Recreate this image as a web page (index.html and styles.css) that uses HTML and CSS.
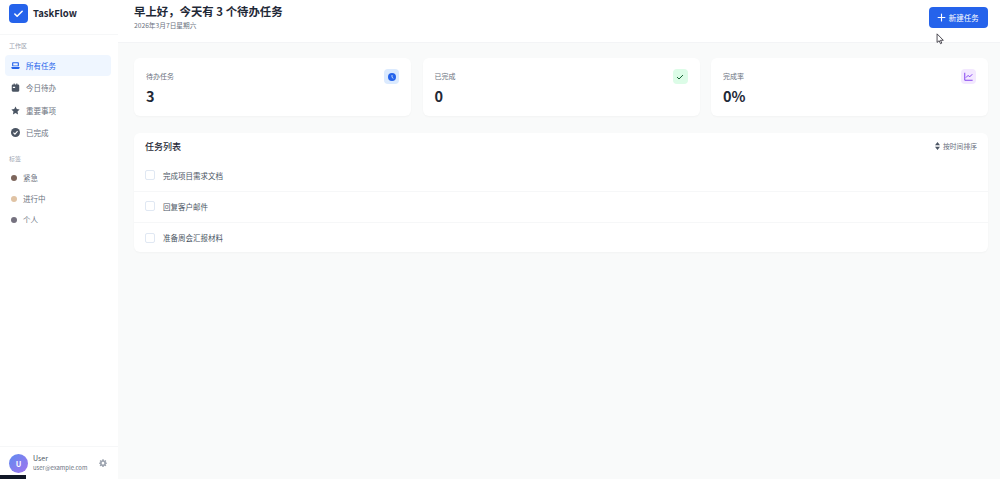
FILE: index.html
```html
<!DOCTYPE html>
<html lang="zh">
<head>
<meta charset="utf-8">
<title>TaskFlow</title>
<link rel="stylesheet" href="styles.css">
</head>
<body>
<div class="app">
  <aside class="sidebar">
    <div class="brand">
      <div class="logo"><svg viewBox="0 0 24 24" width="11" height="11" fill="none" stroke="#fff" stroke-width="3.4" stroke-linecap="round" stroke-linejoin="round"><path d="M4 13l5 5L20 7"/></svg></div>
      <span class="brand-name">TaskFlow</span>
    </div>
    <div class="section-title first">工作区</div>
    <nav class="nav">
      <a class="nav-item active"><svg viewBox="0 0 24 24" width="9" height="9" fill="#2563eb"><path d="M5 3h14a2 2 0 0 1 2 2v9H3V5a2 2 0 0 1 2-2zm1 3v6h12V6H6zM1 16h22v2a3 3 0 0 1-3 3H4a3 3 0 0 1-3-3v-2z"/></svg><span>所有任务</span></a>
      <a class="nav-item"><svg viewBox="0 0 24 24" width="9" height="9" fill="#4b5563"><path d="M7 1h3v3h4V1h3v3h2a3 3 0 0 1 3 3v13a3 3 0 0 1-3 3H5a3 3 0 0 1-3-3V7a3 3 0 0 1 3-3h2V1zM5 10v3h6v-3H5z"/></svg><span>今日待办</span></a>
      <a class="nav-item"><svg viewBox="0 0 24 24" width="9" height="9" fill="#4b5563"><path d="M12 1l3.400 7.300 7.600.9-5.600 5.400 1.500 7.900L12 18.600l-6.900 3.900 1.500-7.900L1 9.200l7.600-.9z"/></svg><span>重要事项</span></a>
      <a class="nav-item"><svg viewBox="0 0 24 24" width="9" height="9"><circle cx="12" cy="12" r="12" fill="#4b5563"/><path d="M6.500 12.500l4 4 7-8" fill="none" stroke="#fff" stroke-width="3"/></svg><span>已完成</span></a>
    </nav>
    <div class="section-title tags-title">标签</div>
    <div class="tags">
      <div class="tag"><i class="dot dot-urgent"></i><span>紧急</span></div>
      <div class="tag"><i class="dot dot-progress"></i><span>进行中</span></div>
      <div class="tag"><i class="dot dot-personal"></i><span>个人</span></div>
    </div>
    <div class="user">
      <div class="avatar">U</div>
      <div class="user-info">
        <div class="user-name">User</div>
        <div class="user-mail">user@example.com</div>
      </div>
      <svg class="gear" viewBox="0 0 24 24" width="8" height="8" fill="#9ca3af"><path fill-rule="evenodd" d="M10 1h4l.6 3.100 1.900.8L19.200 3 22 5.800l-1.900 2.700.8 1.900L24 11v3l-3.100.6-.8 1.900 1.900 2.700-2.800 2.800-2.700-1.900-1.900.8L14 24h-4l-.6-3.100-1.900-.8L4.800 22 2 19.200l1.900-2.700-.8-1.900L0 14v-3l3.100-.6.8-1.900L2 5.800 4.800 3l2.700 1.900 1.900-.8zM12 8.500a4 4 0 1 0 0 8 4 4 0 0 0 0-8z"/></svg>
    </div>
  </aside>
  <main class="main">
    <header class="topbar">
      <div>
        <h1 class="greeting">早上好，今天有 3 个待办任务</h1>
        <p class="date">2026年3月7日星期六</p>
      </div>
      <button class="new-btn"><svg viewBox="0 0 24 24" width="9" height="9" fill="none" stroke="#fff" stroke-width="3" stroke-linecap="round"><path d="M12 3v18M3 12h18"/></svg><span>新建任务</span></button>
    </header>
    <div class="content">
      <section class="stats">
        <div class="card stat">
          <div class="stat-text"><div class="stat-label">待办任务</div><div class="stat-value">3</div></div>
          <div class="stat-icon icon-blue"><svg viewBox="0 0 24 24" width="8" height="8"><circle cx="12" cy="12" r="12" fill="#2563eb"/><path d="M12 6v7l4 3" fill="none" stroke="#dbeafe" stroke-width="2.500"/></svg></div>
        </div>
        <div class="card stat">
          <div class="stat-text"><div class="stat-label">已完成</div><div class="stat-value">0</div></div>
          <div class="stat-icon icon-green"><svg viewBox="0 0 24 24" width="8" height="8" fill="none" stroke="#166534" stroke-width="3" stroke-linecap="round" stroke-linejoin="round"><path d="M4 13l5 5L20 7"/></svg></div>
        </div>
        <div class="card stat">
          <div class="stat-text"><div class="stat-label">完成率</div><div class="stat-value">0%</div></div>
          <div class="stat-icon icon-purple"><svg viewBox="0 0 24 24" width="9" height="9" fill="none" stroke="#7c3aed" stroke-width="2.500" stroke-linejoin="round"><path d="M2 2v20h21"/><path d="M5 15l6-6 4 4 7-7"/></svg></div>
        </div>
      </section>
      <section class="card list">
        <div class="list-head">
          <h2 class="list-title">任务列表</h2>
          <div class="sort"><svg viewBox="0 0 10 16" width="5" height="8" fill="#4b5563"><path d="M5 0l5 6.500H0zM5 16l5-6.500H0z"/></svg><span>按时间排序</span></div>
        </div>
        <div class="task"><i class="check"></i><span>完成项目需求文档</span></div>
        <div class="task"><i class="check"></i><span>回复客户邮件</span></div>
        <div class="task"><i class="check"></i><span>准备周会汇报材料</span></div>
      </section>
    </div>
  </main>
</div>
<svg class="cursor" viewBox="0 0 10 14" width="9" height="12"><path d="M1 1v10l2.500-2 1.500 3.500 1.500-.7L5 8.500h3.300z" fill="#fff" stroke="#33313a" stroke-width="1"/></svg>
<div class="taskbar-edge"></div>
</body>
</html>
```

FILE: styles.css
```css
* { box-sizing: border-box; }
html, body { margin: 0; height: 100%; }
body {
  font-family: "Noto Sans CJK SC", "Noto Sans", sans-serif;
  color: #1f2937;
  background: #f9fafa;
  overflow: hidden;
}
.app { display: flex; height: 479px; }

.sidebar {
  width: 118px;
  flex: none;
  display: flex;
  flex-direction: column;
  background: #fff;
}
.brand {
  height: 35px;
  flex: none;
  display: flex;
  align-items: flex-start;
  gap: 5px;
  padding: 4px 9px 0;
  border-bottom: 1px solid #f6f7f8;
}
.logo {
  width: 19px;
  height: 19px;
  border-radius: 4px;
  background: #2563eb;
  display: flex;
  align-items: center;
  justify-content: center;
}
.brand-name { font-size: 9.500px; font-weight: 700; line-height: 19px; color: #1f2937; }
.section-title { font-size: 6px; line-height: 8px; color: #9ca3af; padding-left: 9px; }
.section-title.first { margin-top: 7px; }
.nav { display: flex; flex-direction: column; gap: 2px; margin: 5px 7px 0 5px; }
.nav-item {
  height: 20.500px;
  display: flex;
  align-items: center;
  gap: 6px;
  padding-left: 6px;
  border-radius: 4px;
  font-size: 7.500px;
  color: #6b7280;
}
.nav-item svg { flex: none; }
.nav-item.active { background: #eff6ff; color: #2563eb; }
.tags-title { margin-top: 12px; }
.tags { display: flex; flex-direction: column; margin-top: 4px; padding-left: 11px; }
.tag {
  height: 21px;
  display: flex;
  align-items: center;
  gap: 6px;
  font-size: 7.500px;
  color: #6b7280;
}
.dot { width: 6px; height: 6px; border-radius: 50%; flex: none; }
.dot-urgent { background: #7d665c; }
.dot-progress { background: #e0c3a4; }
.dot-personal { background: #75717f; }

.user {
  margin-top: auto;
  height: 33px;
  flex: none;
  display: flex;
  align-items: center;
  padding: 0 11px 0 9px;
  gap: 5px;
  border-top: 1px solid #f6f7f8;
}
.avatar {
  width: 19px;
  height: 19px;
  flex: none;
  border-radius: 50%;
  background: linear-gradient(135deg, #5f8bf0, #a274ee);
  color: #fff;
  font-size: 7.500px;
  font-weight: 700;
  display: flex;
  align-items: center;
  justify-content: center;
}
.user-info { flex: 1; min-width: 0; }
.user-name { font-size: 7px; line-height: 9px; color: #4b5563; }
.user-mail { font-size: 5.900px; line-height: 9px; color: #6b7280; white-space: nowrap; }
.gear { flex: none; }

.main { flex: 1; min-width: 0; display: flex; flex-direction: column; }
.topbar {
  height: 43px;
  flex: none;
  display: flex;
  justify-content: space-between;
  align-items: flex-start;
  padding: 3px 12px 0 16px;
  background: #fff;
  border-bottom: 1px solid #f3f4f6;
}
.greeting { margin: 0; font-size: 11.400px; line-height: 17px; font-weight: 700; color: #1f2937; }
.date { margin: 0; font-size: 6.700px; line-height: 10px; color: #6b7280; }
.new-btn {
  margin-top: 4px;
  width: 59px;
  height: 21px;
  border: 0;
  border-radius: 4px;
  background: #2563eb;
  color: #fff;
  display: flex;
  align-items: center;
  justify-content: center;
  gap: 3px;
  font: 400 7.500px "Noto Sans CJK SC", "Noto Sans", sans-serif;
  padding: 0 1.500px 0 0;
}
.content { flex: 1; padding: 15px 12px 0 16px; display: flex; flex-direction: column; gap: 17px; }
.card { background: #fff; border-radius: 6px; box-shadow: 0 1px 2px rgba(0, 0, 0, .03); }
.stats { display: grid; grid-template-columns: repeat(3, 1fr); gap: 11.500px; }
.stat {
  height: 58px;
  display: flex;
  justify-content: space-between;
  padding: 11px 12px;
}
.stat-label { font-size: 7px; line-height: 14px; color: #6b7280; }
.stat-value { font-size: 14.500px; line-height: 20px; margin-top: 3px; font-weight: 700; color: #1f2937; }
.stat-icon {
  width: 15px;
  height: 15px;
  border-radius: 4px;
  display: flex;
  align-items: center;
  justify-content: center;
}
.icon-blue { background: #dbeafe; }
.icon-green { background: #dcfce7; }
.icon-purple { background: #f3e8ff; }

.list-head {
  height: 28px;
  display: flex;
  align-items: center;
  justify-content: space-between;
  padding: 0 11px 2px;
}
.list-title { margin: 0; font-size: 9px; font-weight: 500; color: #1f2937; }
.sort { display: flex; align-items: center; gap: 3px; font-size: 6.800px; color: #6b7280; }
.task {
  height: 31px;
  display: flex;
  align-items: center;
  gap: 8px;
  padding: 0 0 2px 11px;
  font-size: 7.500px;
  color: #4b5563;
  border-bottom: 1px solid #f6f7f8;
}
.task:last-child { border-bottom: 0; height: 29px; padding-bottom: 0; }
.check { width: 10px; height: 10px; border: 1px solid #e0e8f3; border-radius: 2px; flex: none; }

.cursor { position: absolute; left: 936px; top: 33px; }
.taskbar-edge { position: absolute; left: 0; bottom: 0; width: 26px; height: 4px; background: #111827; }
```
